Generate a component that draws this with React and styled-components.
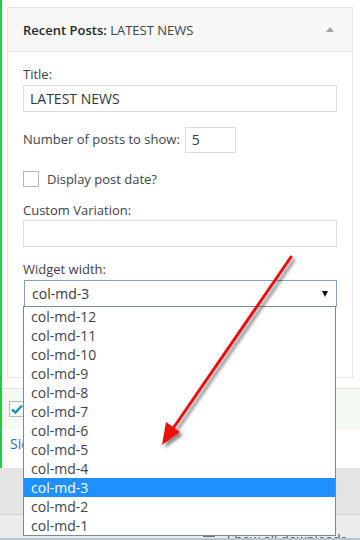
import React from 'react'
import styled, { createGlobalStyle } from 'styled-components'

const GlobalStyle = createGlobalStyle`
    html, body {
        margin: 0;
        padding: 0;
        background: #fff;
    }
    body {
        font-family: "Open Sans", "Liberation Sans", sans-serif;
        color: #32373c;
    }
`

const Screen = styled.div`
    position: relative;
    width: 360px;
    height: 540px;
    overflow: hidden;
    background: #fff;
`

const SidebarArea = styled.div`
    height: 468px;
    border-left: 2px solid #1fcb4a;
    box-sizing: border-box;
    display: flex;
    flex-direction: column;
`

const Widget = styled.div`
    margin: 7px 7px 0 5px;
    border: 1px solid #e5e5e5;
    background: #fff;
`

const WidgetHeader = styled.div`
    height: 43px;
    padding: 0 15px;
    display: flex;
    align-items: center;
    justify-content: space-between;
    background: #f7f7f7;
    border-bottom: 1px solid #e5e5e5;
    font-size: 13px;
    color: #23282d;
    b {
        font-weight: 600;
    }
    span {
        color: #3c434a;
    }
`

const Toggle = styled.div`
    width: 0;
    height: 0;
    margin-right: 3px;
    border-left: 4px solid transparent;
    border-right: 4px solid transparent;
    border-bottom: 5px solid #9ea3a8;
`

const WidgetBody = styled.div`
    padding: 13px 15px 70px;
    display: flex;
    flex-direction: column;
`

const Label = styled.div`
    font-size: 13px;
    line-height: 18px;
    color: #3c434a;
    margin-top: ${p => p.$top || 0}px;
`

const Input = styled.div`
    box-sizing: border-box;
    height: ${p => p.$height || 27}px;
    width: ${p => p.$width || '100%'};
    margin-top: ${p => p.$top || 2}px;
    border: 1px solid #dddddd;
    padding: 0 6px;
    font-size: 14px;
    line-height: ${p => (p.$height || 27) - 2}px;
    color: #32373c;
    background: #fff;
`

const InlineRow = styled.div`
    display: flex;
    align-items: center;
    gap: 5px;
    margin-top: ${p => p.$top || 0}px;
    font-size: 13px;
    line-height: 16px;
    color: #3c434a;
`

const Checkbox = styled.div`
    box-sizing: border-box;
    width: 16px;
    height: 16px;
    border: 1px solid #b4b9be;
    background: #fff;
    margin-right: 3px;
    display: flex;
    align-items: center;
    justify-content: center;
    flex-shrink: 0;
`

const SelectBox = styled.div`
    position: relative;
    box-sizing: border-box;
    height: 27px;
    margin: 2px 0 0 1px;
    border: 1px solid #7fa2cc;
    padding: 0 7px;
    display: flex;
    align-items: center;
    justify-content: space-between;
    font-size: 14px;
    color: #32373c;
    background: #fff;
`

const Caret = styled.div`
    width: 0;
    height: 0;
    margin-right: 1px;
    border-left: 3.5px solid transparent;
    border-right: 3.5px solid transparent;
    border-top: 6px solid #111;
`

const Dropdown = styled.div`
    position: absolute;
    top: 100%;
    left: -2px;
    right: 0;
    border: 1px solid #7a8a9b;
    background: #fff;
    z-index: 2;
`

const Option = styled.div`
    height: 19px;
    padding-left: 7px;
    font-size: 14px;
    line-height: 19px;
    color: ${p => (p.$selected ? '#fff' : '#3c434a')};
    background: ${p => (p.$selected ? '#1e90ff' : 'transparent')};
`

const Settings = styled.div`
    margin-top: 10px;
    border-top: 1px solid #e8e8e8;
    display: flex;
    flex-direction: column;
`

const CheckStrip = styled.div`
    height: 40px;
    padding-left: 7px;
    display: flex;
    align-items: center;
    background: #f2faf2;
`

const SideLink = styled.div`
    padding: 5px 0 0 8px;
    font-size: 14px;
    color: #2271b1;
`

const GrayBar = styled.div`
    height: 46px;
    background: #e4e4e4;
    border-bottom: 1px solid #d2d2d2;
`

const FootBar = styled.div`
    height: 25px;
    background: #ececec;
    display: flex;
    align-items: flex-end;
    justify-content: flex-end;
    padding-right: 13px;
    gap: 12px;
    overflow: hidden;
    border-bottom: 2px solid #b8c4ce;
    box-sizing: border-box;
`

const FootText = styled.div`
    font-size: 13px;
    line-height: 13px;
    height: 5px;
    overflow: hidden;
    color: #50575e;
`

const FootIcon = styled.div`
    width: 12px;
    height: 3px;
    margin-bottom: 1px;
    background: #6b7075;
`

const ArrowLayer = styled.svg`
    position: absolute;
    left: 0;
    top: 0;
    pointer-events: none;
    z-index: 5;
`

const options = ['col-md-12', 'col-md-11', 'col-md-10', 'col-md-9', 'col-md-8', 'col-md-7', 'col-md-6', 'col-md-5', 'col-md-4', 'col-md-3', 'col-md-2', 'col-md-1']

const App = () => {
    return (
        <Screen>
            <GlobalStyle />
            <SidebarArea>
                <Widget>
                    <WidgetHeader>
                        <div><b>Recent Posts:</b> <span>LATEST NEWS</span></div>
                        <Toggle />
                    </WidgetHeader>
                    <WidgetBody>
                        <Label>Title:</Label>
                        <Input>LATEST NEWS</Input>
                        <InlineRow $top={13}>
                            Number of posts to show:
                            <Input $width='51px' $top={0} $height={26}>5</Input>
                        </InlineRow>
                        <InlineRow $top={18}>
                            <Checkbox />
                            Display post date?
                        </InlineRow>
                        <Label $top={14}>Custom Variation:</Label>
                        <Input $top={1} />
                        <Label $top={13}>Widget width:</Label>
                        <SelectBox>
                            col-md-3
                            <Caret />
                            <Dropdown>
                                {options.map(o => (
                                    <Option key={o} $selected={o === 'col-md-3'}>{o}</Option>
                                ))}
                            </Dropdown>
                        </SelectBox>
                    </WidgetBody>
                </Widget>
                <Settings>
                    <CheckStrip>
                        <Checkbox>
                            <svg width='12' height='10' viewBox='0 0 12 10'>
                                <path d='M1 5.5 L4.5 8.5 L11 1.5' fill='none' stroke='#1e8cbe' strokeWidth='2.4' />
                            </svg>
                        </Checkbox>
                    </CheckStrip>
                    <SideLink>Sidebar</SideLink>
                </Settings>
            </SidebarArea>
            <GrayBar />
            <FootBar>
                <FootIcon />
                <FootText>Show all downloads</FootText>
            </FootBar>
            <ArrowLayer width='360' height='540' viewBox='0 0 360 540'>
                <defs>
                    <filter id='shadow' x='-20%' y='-20%' width='140%' height='140%'>
                        <feDropShadow dx='3' dy='3' stdDeviation='1.6' floodColor='#000' floodOpacity='0.45' />
                    </filter>
                </defs>
                <g filter='url(#shadow)'>
                    <line x1='291' y1='257' x2='172' y2='430' stroke='#ee1111' strokeWidth='3' strokeLinecap='round' />
                    <polygon points='162,445 180,432 166,422' fill='#ee1111' />
                </g>
            </ArrowLayer>
        </Screen>
    )
}

export default App
